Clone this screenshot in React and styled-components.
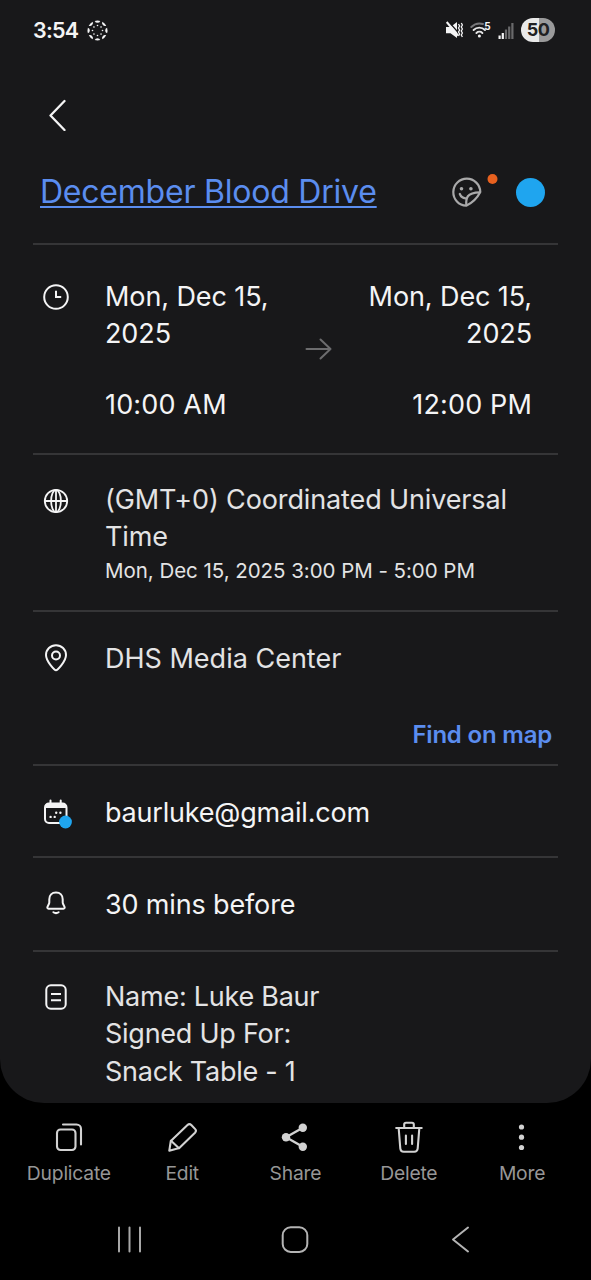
import React from "react";
import styled, { createGlobalStyle } from "styled-components";

const GlobalStyle = createGlobalStyle`
    * {
        box-sizing: border-box;
    }
    body {
        margin: 0;
        background-color: #000000;
        font-family: Inter, Roboto, sans-serif;
    }
    svg {
        display: block;
        flex: none;
    }
`;

const Screen = styled.div`
    width: 591px;
    height: 1280px;
    background-color: #000000;
    color: #f4f4f5;
    overflow: hidden;
`;

const Panel = styled.main`
    height: 1103px;
    padding: 0 33px;
    background-color: #18181a;
    border-radius: 0 0 44px 44px;
    overflow: hidden;
`;

const StatusBar = styled.header`
    display: flex;
    justify-content: space-between;
    align-items: center;
    height: 60px;
    margin-right: -30px;
    padding-right: 33px;
`;

const StatusGroup = styled.div`
    display: flex;
    align-items: center;
    gap: ${props => props.$gap}px;
`;

const Clock = styled.span`
    font-size: 21.5px;
    font-weight: 600;
    letter-spacing: -0.75px;
`;

const Battery = styled.span`
    width: 34px;
    height: 24px;
    border-radius: 12px;
    background: linear-gradient(90deg, #e9e9e9 52%, #9a9a9b 52%);
    color: #202022;
    font-size: 18px;
    font-weight: 700;
    line-height: 24px;
    letter-spacing: -0.5px;
    text-align: center;
`;

const BackButton = styled.button`
    display: flex;
    align-items: center;
    width: 50px;
    height: 110px;
    padding: 0 0 0 14px;
    border: none;
    background: none;
`;

const TitleRow = styled.div`
    display: flex;
    align-items: center;
    height: 73px;
    padding: 0 13px 29px 7px;
`;

const Title = styled.h1`
    flex: 1;
    margin: 0;
    color: #5b8def;
    font-size: 32px;
    font-weight: 400;
    line-height: 44px;
    letter-spacing: -0.22px;
    text-decoration: underline;
    text-decoration-thickness: 2px;
    text-underline-offset: 3px;
    text-decoration-skip-ink: none;
    white-space: nowrap;
`;

const ColorDot = styled.span`
    width: 29px;
    height: 29px;
    margin-left: 17px;
    border-radius: 50%;
    background-color: #1fa5ef;
`;

const Row = styled.section`
    display: grid;
    grid-template-columns: 72px 1fr;
    height: ${props => props.$height}px;
    padding-top: ${props => props.$top}px;
    border-top: 2px solid #353537;
`;

const RowIcon = styled.div`
    display: flex;
    justify-content: center;
    width: 46px;
    padding-top: ${props => props.$top || 3}px;
`;

const Text = styled.p`
    margin: 0;
    font-size: 27px;
    line-height: 37.3px;
    letter-spacing: ${props => props.$spacing || 0}px;
    color: ${props => props.$dim ? "#e3e3e4" : "#f4f4f5"};
    white-space: nowrap;
`;

const SmallText = styled(Text)`
    font-size: 20.5px;
    line-height: 29px;
`;

const Dates = styled.div`
    display: flex;
    justify-content: space-between;
    padding-right: 26px;
`;

const DateColumn = styled.div`
    display: flex;
    flex-direction: column;
    gap: 33px;
    text-align: ${props => props.$align};
`;

const ArrowBox = styled.div`
    display: flex;
    padding-top: 59px;
`;

const MapLink = styled.a`
    display: block;
    margin-top: 42px;
    padding-right: 6px;
    color: #5b8def;
    font-size: 24px;
    font-weight: 600;
    line-height: 32px;
    letter-spacing: -0.2px;
    text-align: right;
`;

const Toolbar = styled.nav`
    display: grid;
    grid-template-columns: repeat(5, 113.3px);
    justify-content: center;
    height: 97px;
    padding-top: 16px;
`;

const Tool = styled.div`
    display: flex;
    flex-direction: column;
    align-items: center;
    gap: 5px;
    color: #969696;
    font-size: 19.3px;
    line-height: 26px;
    letter-spacing: -0.2px;
`;

const SystemNav = styled.nav`
    display: grid;
    grid-template-columns: repeat(3, 165.5px);
    justify-content: center;
    justify-items: center;
    align-items: center;
    height: 79px;
    padding-right: 2px;
`;

const stroke = {
    fill: "none",
    stroke: "#f4f4f5",
    strokeWidth: 2,
    strokeLinecap: "round",
    strokeLinejoin: "round"
};

const toolStroke = { ...stroke, stroke: "#d2d2d2", strokeWidth: 2.1 };

function CanvasIcon() {
    const parts = [0, 45, 90, 135, 180, 225, 270, 315];
    return (
        <svg width="22" height="22" viewBox="-10.500 -11.500 22 22" fill="#f4f4f5">
            {parts.map(angle => (
                <g key={angle} transform={`rotate(${angle})`}>
                    <path d="M-2.800 -9.600A10 10 0 0 1 2.800 -9.600A3 3 0 0 1 -2.800 -9.600Z" />
                    <circle cx="0" cy="-5" r="0.800" />
                </g>
            ))}
        </svg>
    );
}

function MuteIcon() {
    return (
        <svg width="18" height="18" viewBox="-0.500 0 18 18">
            <path d="M0.500 6h4.500L11.500 1v16L5 12.300H0.500z" fill="#f4f4f5" />
            <path d="M3 0.500L13.500 12.500" stroke="#18181a" strokeWidth="1.400" />
            <path d="M1.200 1L12.500 14.500" stroke="#f4f4f5" strokeWidth="2" />
            <path d="M13 3l1.100 2-1.100 2 1.100 2-1.100 2 1.100 2-1.100 2M15.800 2l1.100 2-1.100 2 1.100 2-1.100 2 1.100 2-1.100 2 1.100 2" fill="none" stroke="#f4f4f5" strokeWidth="1.300" />
        </svg>
    );
}

function WifiIcon() {
    return (
        <svg width="21" height="18" viewBox="0 0 21 18">
            <g fill="none" strokeWidth="1.900" strokeLinecap="round">
                <path d="M1.300 6A12 12 0 0 1 13 3" stroke="#77777a" />
                <path d="M3.600 9A8 8 0 0 1 15 9" stroke="#e4e4e5" />
                <path d="M6.400 12A4.400 4.400 0 0 1 12.400 12" stroke="#e4e4e5" />
            </g>
            <circle cx="9.400" cy="15" r="1.500" fill="#f4f4f5" />
            <text x="14.300" y="8.500" fontSize="10" fontWeight="700" fill="#f4f4f5">5</text>
        </svg>
    );
}

function SignalIcon() {
    return (
        <svg width="16" height="17" viewBox="0 0 16 17">
            <path d="M0.500 13.500h2.200V17H0.500zM3.700 11h2.200v6H3.700z" fill="#f4f4f5" />
            <path d="M6.900 7.500h2.200V17H6.900zM10.100 4.500h2.200V17h-2.200zM13.300 1h2.200v16h-2.200z" fill="#69696b" />
        </svg>
    );
}

function StickerIcon() {
    return (
        <svg width="47" height="37" viewBox="0.500 0.500 47 37">
            <g fill="none" stroke="#a9a9aa" strokeWidth="2.200" strokeLinejoin="round" strokeLinecap="round">
                <path d="M14.700 32.200A13.500 13.500 0 1 1 28.800 18.500C26 24 20.500 29.500 14.700 32.200Z" />
                <path d="M14.800 31.500C14.300 25 15 19 28.300 18.800" />
                <path d="M8.300 20.500C9.300 23 11.300 24.600 14 24.800" />
            </g>
            <circle cx="10" cy="15.200" r="1.800" fill="#a9a9aa" />
            <circle cx="19.400" cy="15.200" r="1.800" fill="#a9a9aa" />
            <circle cx="41" cy="5.500" r="5" fill="#e8611f" />
        </svg>
    );
}

function ClockIcon() {
    return (
        <svg width="28" height="28" viewBox="0 0 28 28" {...stroke}>
            <circle cx="14" cy="14" r="11.800" />
            <path d="M14 7.800V14h5.200" strokeLinecap="butt" strokeLinejoin="miter" />
        </svg>
    );
}

function GlobeIcon() {
    return (
        <svg width="28" height="28" viewBox="0 0 28 28" {...stroke} strokeWidth="1.800">
            <circle cx="14" cy="14" r="11.200" />
            <ellipse cx="14" cy="14" rx="4.900" ry="11.200" />
            <path d="M2.800 14h22.400M14 2.800v22.400" />
        </svg>
    );
}

function PinIcon() {
    return (
        <svg width="28" height="30" viewBox="0 0 28 30" {...stroke}>
            <path d="M14 27.300C12.800 27.300 4 18.500 4 12A10 9.800 0 0 1 24 12C24 18.500 15.200 27.300 14 27.300Z" />
            <circle cx="14" cy="12.500" r="4" />
        </svg>
    );
}

function CalendarIcon() {
    return (
        <svg width="32" height="30" viewBox="-2 0 32 30">
            <g {...stroke}>
                <rect x="3" y="4.500" width="21.500" height="19.500" rx="4" />
                <path d="M8.500 1.500v3M18.700 1.500v3" />
            </g>
            <path d="M3 9V8a4 4 0 0 1 4-4h13.500a4 4 0 0 1 4 4v1z" fill="#f4f4f5" />
            <g fill="#f4f4f5">
                <circle cx="14.200" cy="13.700" r="1.200" />
                <circle cx="18.400" cy="13.700" r="1.200" />
                <circle cx="8.600" cy="17.900" r="1.200" />
                <circle cx="12.700" cy="17.900" r="1.200" />
            </g>
            <circle cx="23.500" cy="23" r="6.400" fill="#1fa5ef" />
        </svg>
    );
}

function BellIcon() {
    return (
        <svg width="28" height="28" viewBox="0 0 28 28" {...stroke}>
            <path d="M14 3.500C9.800 3.500 7.300 6.600 7.300 10.300V13.500C7.300 15.300 5.300 17 5.300 18.600C5.300 19.300 5.700 19.700 6.500 19.700H21.500C22.300 19.700 22.700 19.300 22.700 18.600C22.700 17 20.700 15.300 20.700 13.500V10.300C20.700 6.600 18.200 3.500 14 3.500Z" />
            <path d="M11.400 23.200C12.800 24.200 15.200 24.200 16.600 23.200" />
        </svg>
    );
}

function NoteIcon() {
    return (
        <svg width="28" height="28" viewBox="0 0 28 28" {...stroke}>
            <rect x="4.300" y="2.300" width="19.400" height="23.400" rx="4.500" />
            <path d="M9 11h10M9 17.300h10" strokeLinecap="butt" />
        </svg>
    );
}

function DuplicateIcon() {
    return (
        <svg width="32" height="36" viewBox="0 0 32 36" {...toolStroke}>
            <rect x="4" y="10.500" width="18.500" height="20.500" rx="3.500" />
            <path d="M10 5.500H23.500a4.500 4.500 0 0 1 4.500 4.500v15.500" />
        </svg>
    );
}

function EditIcon() {
    return (
        <svg width="32" height="36" viewBox="0 0 32 36" {...toolStroke}>
            <path d="M3.300 31.700L4.800 22L21.500 6a2.800 2.800 0 0 1 3.800 0L29 9.900a2.800 2.800 0 0 1 0 3.900L13.300 29Z" />
            <path d="M5 21.800L13 29.200" />
        </svg>
    );
}

function ShareIcon() {
    return (
        <svg width="32" height="36" viewBox="0 0 32 36" {...toolStroke} strokeWidth="2.400">
            <path d="M23.800 8.700L7 18.200l16.800 9.500" />
            <g fill="#d2d2d2" stroke="none">
                <circle cx="23.800" cy="8.700" r="4.200" />
                <circle cx="7" cy="18.200" r="4.200" />
                <circle cx="23.800" cy="27.700" r="4.200" />
            </g>
        </svg>
    );
}

function TrashIcon() {
    return (
        <svg width="32" height="36" viewBox="0 0 32 36" {...toolStroke}>
            <path d="M3.200 9h25.500M11.200 8.500V5.500a1.800 1.800 0 0 1 1.800-1.800h6a1.800 1.800 0 0 1 1.800 1.800v3" />
            <path d="M5.700 9.500L7.300 29.500a3.500 3.500 0 0 0 3.500 3.200h10.400a3.500 3.500 0 0 0 3.500-3.200L26.300 9.500" />
            <path d="M12.900 16.500v8.500M19.100 16.500v8.500" />
        </svg>
    );
}

function MoreIcon() {
    return (
        <svg width="32" height="36" viewBox="0 0 32 36" fill="#d2d2d2">
            <circle cx="15.500" cy="8" r="2.600" />
            <circle cx="15.500" cy="18.200" r="2.600" />
            <circle cx="15.500" cy="28.500" r="2.600" />
        </svg>
    );
}

const tools = [
    ["Duplicate", DuplicateIcon],
    ["Edit", EditIcon],
    ["Share", ShareIcon],
    ["Delete", TrashIcon],
    ["More", MoreIcon]
];

function App() {
    return (
        <Screen>
            <GlobalStyle />
            <Panel>
                <StatusBar>
                    <StatusGroup $gap={9}>
                        <Clock>3:54</Clock>
                        <CanvasIcon />
                    </StatusGroup>
                    <StatusGroup $gap={7}>
                        <MuteIcon />
                        <WifiIcon />
                        <SignalIcon />
                        <Battery>50</Battery>
                    </StatusGroup>
                </StatusBar>
                <BackButton aria-label="Back">
                    <svg width="20" height="32" viewBox="0 0 20 32" {...stroke} strokeWidth="2.300">
                        <path d="M17.500 2L3.500 16.500L17.500 31" />
                    </svg>
                </BackButton>
                <TitleRow>
                    <Title>December Blood Drive</Title>
                    <StickerIcon />
                    <ColorDot />
                </TitleRow>
                <Row $height={210} $top={33}>
                    <RowIcon $top={5}><ClockIcon /></RowIcon>
                    <Dates>
                        <DateColumn $align="left">
                            <Text $spacing={-0.1}>Mon, Dec 15,<br />2025</Text>
                            <Text $spacing={0.15}>10:00 AM</Text>
                        </DateColumn>
                        <ArrowBox>
                            <svg width="28" height="24" viewBox="0.500 0 28 24" {...stroke} stroke="#6c6c6e">
                                <path d="M2 12h24M16 2.500L26 12L16 21.500" />
                            </svg>
                        </ArrowBox>
                        <DateColumn $align="right">
                            <Text $spacing={-0.1}>Mon, Dec 15,<br />2025</Text>
                            <Text $spacing={0.15}>12:00 PM</Text>
                        </DateColumn>
                    </Dates>
                </Row>
                <Row $height={157} $top={26}>
                    <RowIcon $top={6}><GlobeIcon /></RowIcon>
                    <div>
                        <Text $dim $spacing={-0.13}>(GMT+0) Coordinated Universal<br />Time</Text>
                        <SmallText $dim $spacing={-0.04}>Mon, Dec 15, 2025 3:00 PM - 5:00 PM</SmallText>
                    </div>
                </Row>
                <Row $height={154} $top={28}>
                    <RowIcon><PinIcon /></RowIcon>
                    <div>
                        <Text $dim>DHS Media Center</Text>
                        <MapLink>Find on map</MapLink>
                    </div>
                </Row>
                <Row $height={92} $top={28}>
                    <RowIcon $top={5}><CalendarIcon /></RowIcon>
                    <Text $spacing={-0.2}>baurluke@gmail.com</Text>
                </Row>
                <Row $height={94} $top={28}>
                    <RowIcon><BellIcon /></RowIcon>
                    <Text $spacing={-0.15}>30 mins before</Text>
                </Row>
                <Row $height={153} $top={26}>
                    <RowIcon $top={5}><NoteIcon /></RowIcon>
                    <Text $dim $spacing={-0.25}>Name: Luke Baur<br />Signed Up For:<br />Snack Table - 1</Text>
                </Row>
            </Panel>
            <Toolbar>
                {tools.map(([label, Icon]) => (
                    <Tool key={label}>
                        <Icon />
                        {label}
                    </Tool>
                ))}
            </Toolbar>
            <SystemNav>
                <svg width="28" height="28" viewBox="-0.500 0.500 28 28" {...stroke} stroke="#a8a8a8">
                    <path d="M3.500 2v24M14 2v24M24.500 2v24" />
                </svg>
                <svg width="28" height="28" viewBox="0 0 28 28" {...stroke} stroke="#b4b4b4">
                    <rect x="1.700" y="1.300" width="24.600" height="24.600" rx="8" />
                </svg>
                <svg width="28" height="28" viewBox="-0.500 0.500 28 28" {...stroke} stroke="#b4b4b4">
                    <path d="M21.500 2L6.500 14L21.500 26" />
                </svg>
            </SystemNav>
        </Screen>
    );
}

export default App;
